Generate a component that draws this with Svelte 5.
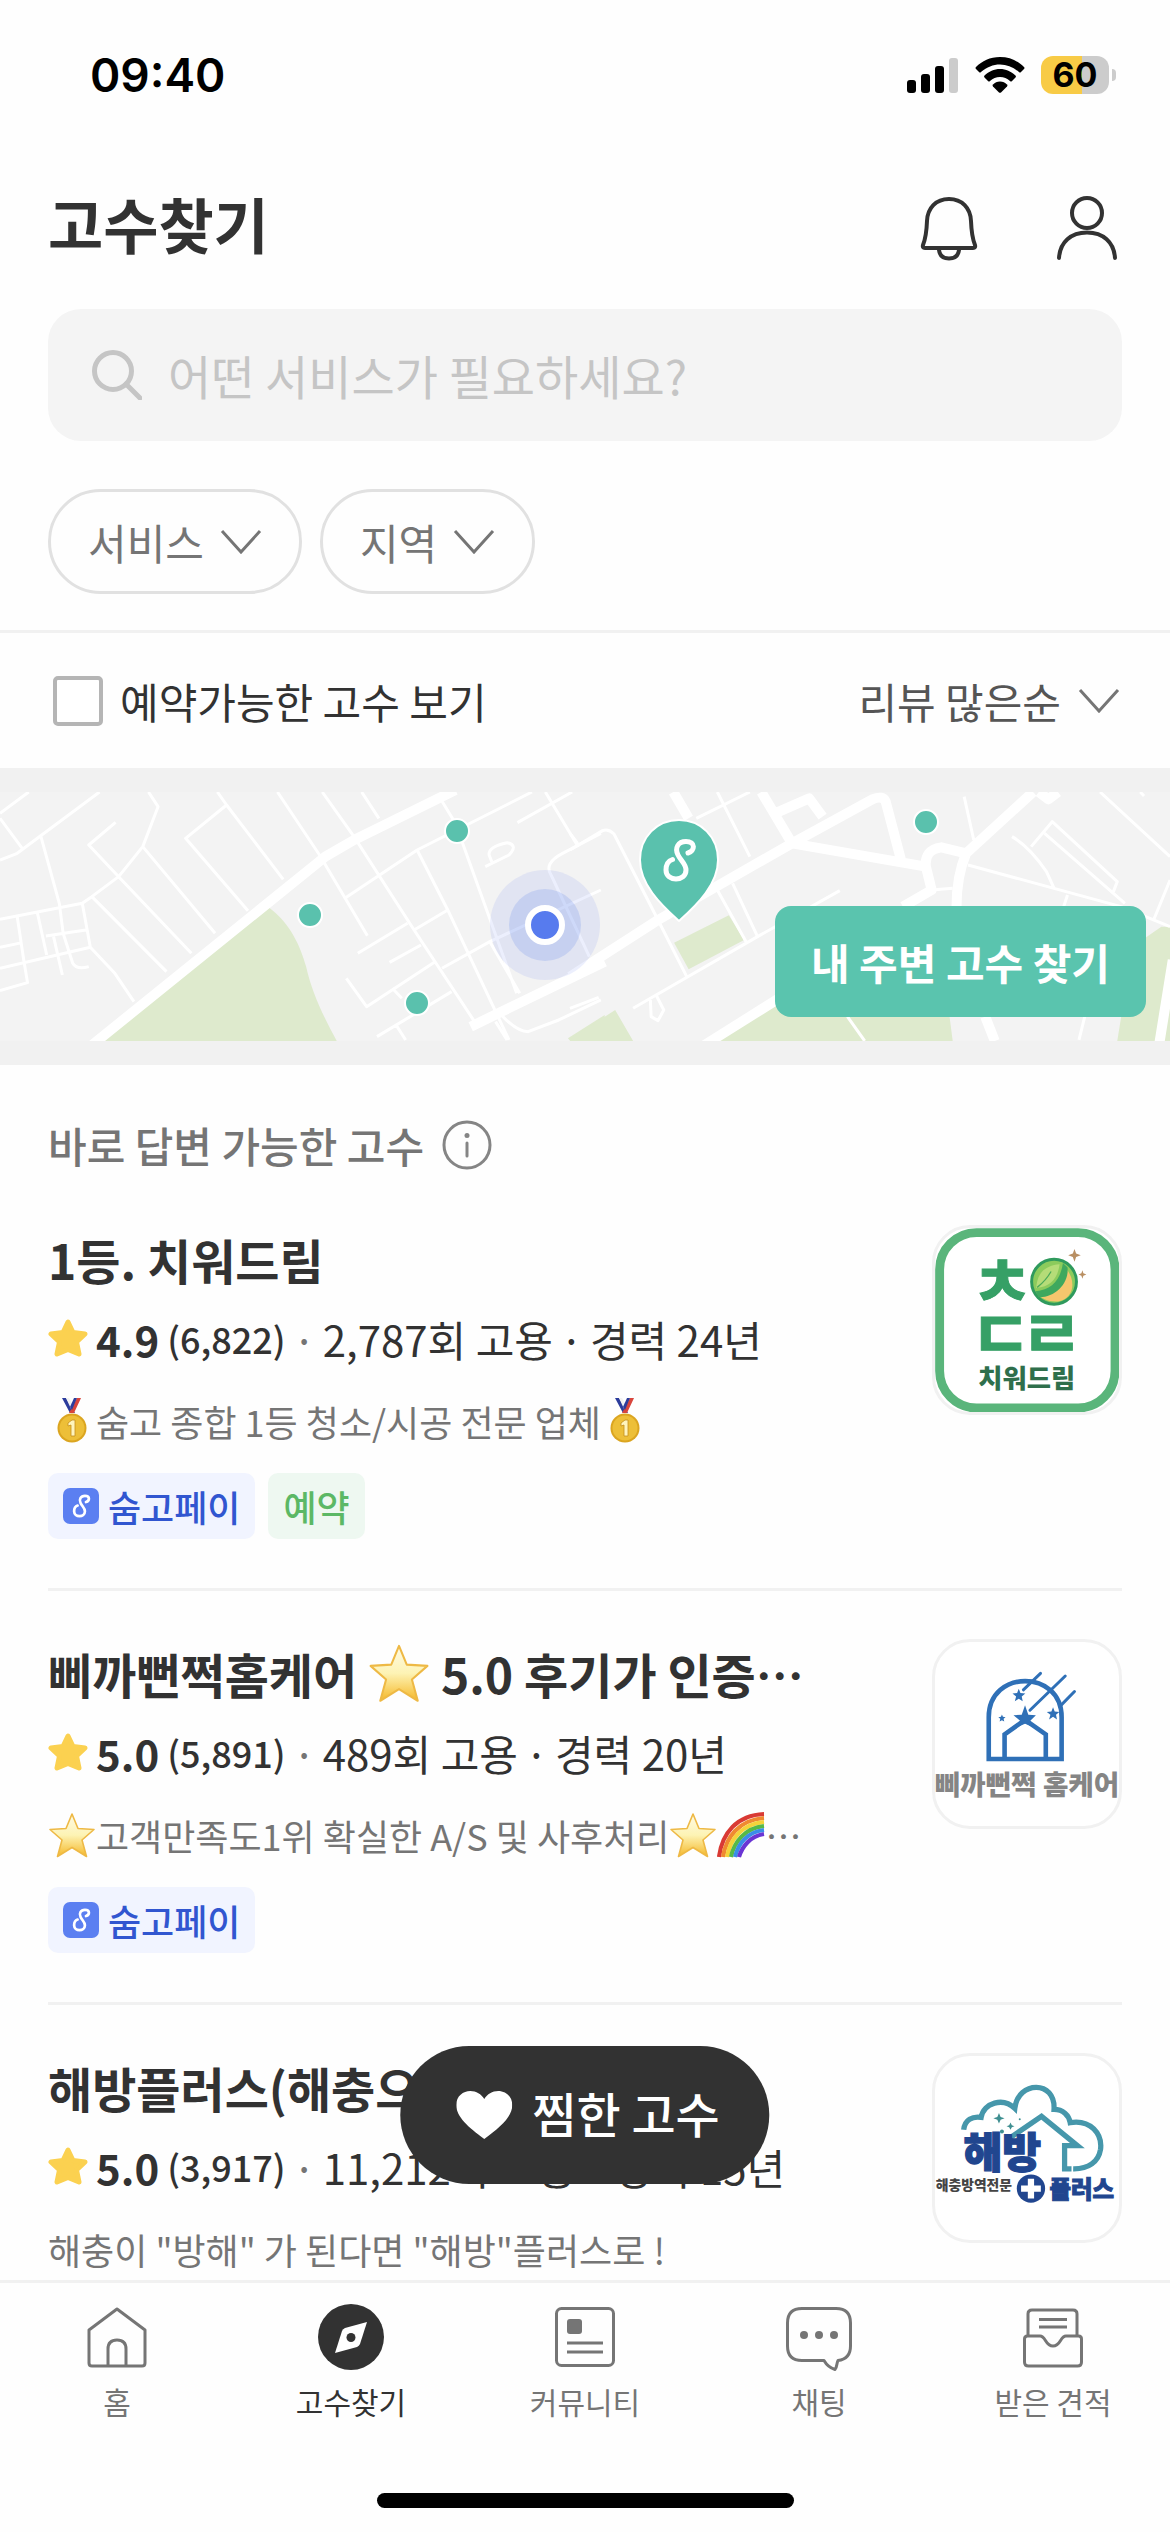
<script lang="ts">
  type Part = string | { emoji: 'medal' | 'star' | 'rainbow' };

  interface Pro {
    logo: 'dream' | 'homecare' | 'plus';
    name: Part[];
    score: string;
    reviews: string;
    hires: string;
    career: string;
    intro: Part[];
    pay: boolean;
    booking: boolean;
  }

  const pros: Pro[] = [
    {
      logo: 'dream',
      name: ['1등. 치워드림'],
      score: '4.9',
      reviews: '(6,822)',
      hires: '2,787회 고용',
      career: '경력 24년',
      intro: [{ emoji: 'medal' }, '숨고 종합 1등 청소/시공 전문 업체', { emoji: 'medal' }],
      pay: true,
      booking: true
    },
    {
      logo: 'homecare',
      name: ['삐까뻔쩍홈케어 ', { emoji: 'star' }, ' 5.0 후기가 인증⋯'],
      score: '5.0',
      reviews: '(5,891)',
      hires: '489회 고용',
      career: '경력 20년',
      intro: [{ emoji: 'star' }, '고객만족도1위 확실한 A/S 및 사후처리', { emoji: 'star' }, { emoji: 'rainbow' }, '⋯'],
      pay: true,
      booking: false
    },
    {
      logo: 'plus',
      name: ['해방플러스(해충으로부터 해방)'],
      score: '5.0',
      reviews: '(3,917)',
      hires: '11,212회 고용',
      career: '경력 15년',
      intro: ['해충이 "방해" 가 된다면 "해방"플러스로 !'],
      pay: false,
      booking: false
    }
  ];

  const tabs = [
    { id: 'home', label: '홈' },
    { id: 'find', label: '고수찾기' },
    { id: 'community', label: '커뮤니티' },
    { id: 'chat', label: '채팅' },
    { id: 'quotes', label: '받은 견적' }
  ];

  let active = $state('find');
  let query = $state('');
  let bookable = $state(false);
</script>

{#snippet chevron()}
  <svg class="chevron" viewBox="0 0 42 26" aria-hidden="true"><path d="M2 2 21 23 40 2" /></svg>
{/snippet}

{#snippet emoji(kind: string)}
  {#if kind === 'star'}
    <svg class="emoji" viewBox="0 0 48 48" role="img" aria-label="별">
      <defs>
        <linearGradient id="starFill" x1="0" y1="0" x2="0" y2="1">
          <stop offset="0" stop-color="#fffbe6" /><stop offset=".5" stop-color="#fdf3b4" /><stop offset="1" stop-color="#f5b829" />
        </linearGradient>
      </defs>
      <path d="M24 3 30 17.500 46 18.500 34 29 38.500 45.500 24 36.500 9.500 45.500 14 29 2 18.500 18 17.500Z" fill="url(#starFill)" stroke="#eeb945" stroke-width="1.600" stroke-linejoin="round" />
    </svg>
  {:else if kind === 'rainbow'}
    <svg class="emoji" viewBox="0 0 48 48" role="img" aria-label="무지개">
      <g fill="none" stroke-width="4.200">
        <path d="M2 46C5 22 20 4 47 3" stroke="#d93a34" />
        <path d="M6 46C9 26 22 9 47 7" stroke="#f08a30" />
        <path d="M10 46C13 28 25 13 47 11" stroke="#f5d33b" />
        <path d="M14 46C17 31 28 17 47 15" stroke="#57b947" />
        <path d="M18 46C21 33 30 21 47 19" stroke="#3a8de8" />
        <path d="M22 46C25 36 33 25 47 23" stroke="#6a35d4" />
      </g>
    </svg>
  {:else}
    <svg class="emoji" viewBox="0 0 48 48" role="img" aria-label="금메달">
      <path d="M14 1h4l9 15h-5z" fill="#2c3c9c" /><path d="M18 1h3l5 9-2 4z" fill="#f2f2f2" />
      <path d="M33 1h-4l-8 15h5z" fill="#d8453c" /><path d="M29 1h-3l-4 9 2 3z" fill="#2c3c9c" />
      <circle cx="24" cy="31" r="14.500" fill="#dba520" /><circle cx="24" cy="31" r="12.500" fill="#edbf38" />
      <path d="M20 26l4-3h3v16h-4V28l-3 1z" fill="#fff4bd" stroke="#c48f1c" stroke-width=".8" />
    </svg>
  {/if}
{/snippet}

{#snippet parts(list: Part[])}
  {#each list as part}{#if typeof part === 'string'}<span class="run">{part}</span>{:else}{@render emoji(part.emoji)}{/if}{/each}
{/snippet}

{#snippet logo(kind: string)}
  {#if kind === 'dream'}
    <svg class="logo" viewBox="98 80 558 558" role="img" aria-label="치워드림">
      <rect x="112" y="94" width="532" height="532" rx="112" fill="#fff" stroke="#5ab57b" stroke-width="27" />
      <g class="logo-jamo" fill="#36a066" stroke="#36a066" stroke-width="3">
        <text x="302" y="320" font-size="205" text-anchor="middle">ㅊ</text>
        <text x="298" y="478" font-size="205" text-anchor="middle">ㄷ</text>
        <text x="452" y="478" font-size="205" text-anchor="middle">ㄹ</text>
      </g>
      <circle cx="459" cy="243" r="68" fill="#8ccb5c" stroke="#2f9a5d" stroke-width="9" />
      <path d="M408 278C455 280 485 245 490 196 530 238 520 295 470 303 440 304 420 294 408 278Z" fill="#f5c66d" />
      <path d="M403 272C450 268 478 240 486 186L500 200C505 250 460 292 412 290Z" fill="#3fa85e" />
      <path d="M405 262C408 215 432 194 476 190 470 232 450 258 405 262Z" fill="#b5dc78" />
      <path d="M408 260Q434 240 450 212" fill="none" stroke="#4caa58" stroke-width="4" />
      <path d="M521 144l5 13 14 6-14 5-5 14-5-14-14-5 14-6zM545 208l3 9 9 4-9 4-3 9-3-9-9-4 9-4z" fill="#b98f62" />
      <text class="logo-text" x="376" y="564" font-size="80" text-anchor="middle" fill="#2f6f4c">치워드림</text>
    </svg>
  {:else if kind === 'homecare'}
    <svg class="logo" viewBox="98 92 558 558" role="img" aria-label="삐까뻔쩍 홈케어">
      <g fill="none" stroke="#2f70b7" stroke-width="14">
        <path d="M261 447V320C261 174 482 174 482 320V447Z" />
        <path d="M309 447V372L371 328 434 372V447" />
        <path d="M366 237 418 187M386 299 493 195M482 282 521 242" stroke-width="9" stroke-linecap="round" />
      </g>
      <g fill="#2f70b7">
        <path d="M371 284 381 313 404 314 387 331 393 349 371 340 349 349 356 331 336 314 361 313Z" />
        <path d="M352 234l5 13 15 1-11 9 3 15-12-8-12 8 4-15-11-9 14-1z" />
        <path d="M456 290l5 13 14 1-10 9 3 14-12-8-12 8 4-14-11-9 14-1z" />
        <path d="M301 312l3 7 8 1-6 5 2 8-7-4-7 4 2-8-6-5 8-1z" />
      </g>
      <text class="logo-text" x="377" y="556" font-size="84" text-anchor="middle" fill="#858585">삐까뻔쩍 홈케어</text>
    </svg>
  {:else}
    <svg class="logo" viewBox="98 104 558 558" role="img" aria-label="해충방역전문 해방플러스">
      <g fill="none" stroke="#4697ab" stroke-width="16">
        <path d="M185 328C188 296 212 286 238 290 246 246 304 228 340 263 350 178 464 176 459 266 486 266 504 283 508 306 570 296 606 340 600 387 594 425 563 447 517 446" />
        <path d="M324 353 421 287 530 376H491V446H512" />
      </g>
      <path d="M292 277l5 12 12 4-12 4-5 12-5-12-12-4 12-4zM327 306l4 8 8 3-8 3-4 8-4-8-8-3 8-3z" fill="#3f8f91" />
      <circle cx="301" cy="333" r="6" fill="#3f8f91" /><circle cx="355" cy="296" r="3" fill="#3f8f91" />
      <text class="logo-text" x="302" y="445" font-size="128" text-anchor="middle" fill="#21468f" stroke="#21468f" stroke-width="4">해방</text>
      <text class="logo-text" x="216" y="511" font-size="42" text-anchor="middle" fill="#444">해충방역전문</text>
      <circle cx="389" cy="506" r="43" fill="#21468f" />
      <path d="M389 476v60M359 506h60" stroke="#fff" stroke-width="19" />
      <text class="logo-text" x="543" y="534" font-size="71" text-anchor="middle" fill="#21468f" stroke="#21468f" stroke-width="3">플러스</text>
    </svg>
  {/if}
{/snippet}

{#snippet tabIcon(id: string)}
  <svg class="tab-icon" viewBox="0 0 68 68" aria-hidden="true">
    {#if id === 'home'}
      <path d="M6 27 34 6 62 27V60Q62 63 59 63H9Q6 63 6 60ZM25 63V46Q25 37 34 37T43 46V63" />
    {:else if id === 'find'}
      <circle cx="34" cy="34" r="33" fill="#323232" stroke="none" />
      <path d="M50 19 43 41Q42 43 40 44L18 50 25 28Q26 26 28 25Z" fill="#fff" stroke="none" />
      <circle cx="34" cy="34.500" r="4.500" fill="#323232" stroke="none" />
    {:else if id === 'community'}
      <rect x="5.500" y="5.500" width="57" height="57" rx="5" />
      <rect x="16" y="16" width="15" height="15" rx="3" fill="#757575" stroke="none" />
      <path d="M16 40H52M16 49H52" />
    {:else if id === 'chat'}
      <path d="M17 5.500H51Q65.500 5.500 65.500 20V43Q65.500 56 53 57.500C51.500 60 52.500 63 50 66.500 45 65 41 61 39 57.500H17Q2.500 57.500 2.500 43V20Q2.500 5.500 17 5.500Z" />
      <g fill="#757575" stroke="none"><circle cx="19" cy="32" r="4" /><circle cx="34" cy="32" r="4" /><circle cx="49" cy="32" r="4" /></g>
    {:else}
      <path d="M9 33V11Q9 7 13 7H54Q58 7 58 11V33M20 16.500H48M20 24H48" />
      <path d="M5.500 36Q5.500 33 8.500 33H21C27 33 26 43 34 43S41 33 47 33H59.500Q62.500 33 62.500 36V59Q62.500 63 58.500 63H9.500Q5.500 63 5.500 59Z" />
    {/if}
  </svg>
{/snippet}

<div class="app">
  <div class="status">
    <time>09:40</time>
    <div class="status-icons">
      <svg class="signal" viewBox="0 0 52 35" aria-hidden="true">
        <rect x="0" y="22" width="9" height="13" rx="3" /><rect x="14" y="16" width="9" height="19" rx="3" />
        <rect x="28" y="8" width="9" height="27" rx="3" /><rect x="42" y="0" width="9" height="35" rx="3" fill="#ccc" />
      </svg>
      <svg class="wifi" viewBox="0 0 50 36" aria-hidden="true">
        <path d="M25 0C35 0 43 4 49 10Q50 11 49 12L46 15Q45 16 44 15C38 10 32 7.500 25 7.500S12 10 6 15Q5 16 4 15L1 12Q0 11 1 10C7 4 15 0 25 0Z" />
        <path d="M25 12C31 12 36 14.500 40.500 18.500Q41.500 19.500 40.500 20.500L37 24Q36 25 35 24C32 21.500 29 20 25 20S18 21.500 15 24Q14 25 13 24L9.500 20.500Q8.500 19.500 9.500 18.500C14 14.500 19 12 25 12Z" />
        <path d="M25 24.500C28 24.500 30 25.500 32 27.500Q33 28.500 32 29.500L26 35.500Q25 36 24 35.500L18 29.500Q17 28.500 18 27.500C20 25.500 22 24.500 25 24.500Z" />
      </svg>
      <div class="battery"><span>60</span></div>
      <i class="battery-tip"></i>
    </div>
  </div>

  <header>
    <h1>고수찾기</h1>
    <div class="header-actions">
      <button aria-label="알림">
        <svg viewBox="0 0 66 66" aria-hidden="true">
          <path d="M33 4C20 4 11.500 13 11 26 10.500 40 9 45 7 50 6.500 52 7 53 9 53H57C59 53 59.500 52 59 50 57 45 55.500 40 55 26 54.500 13 46 4 33 4ZM23 53V55Q24 63.500 33 63.500T43 55V53" />
        </svg>
      </button>
      <button aria-label="내 정보">
        <svg viewBox="0 0 66 66" aria-hidden="true">
          <circle cx="33" cy="18" r="15" /><path d="M5 63C6 47 17 37.500 33 37.500S60 47 61 63" />
        </svg>
      </button>
    </div>
  </header>

  <main>
    <label class="search">
      <svg viewBox="0 0 50 50" aria-hidden="true"><circle cx="21" cy="21" r="18.500" /><path d="M34 34 48 48" /></svg>
      <input type="text" placeholder="어떤 서비스가 필요하세요?" aria-label="서비스 검색" bind:value={query} />
    </label>

    <div class="filters">
      <button>서비스 {@render chevron()}</button>
      <button>지역 {@render chevron()}</button>
    </div>

    <div class="sorting">
      <label><input type="checkbox" bind:checked={bookable} />예약가능한 고수 보기</label>
      <button>리뷰 많은순 {@render chevron()}</button>
    </div>

    <section class="nearby">
      <svg class="map" viewBox="0 0 1170 249" preserveAspectRatio="xMidYMid slice" aria-hidden="true">
        <rect width="1170" height="249" fill="#f3f3f3" />
        <g transform="translate(0 -32) scale(.3827 .3333)">
          <path d="M270 843 700 440C760 490 785 560 800 620 815 700 850 780 880 843ZM1484 835 1580 765V843H1490Z" fill="#deeacd" />
          <g class="roads">
            <path d="M0 160 75 96M0 175 58 265M0 300 45 280 260 96M107 230 155 430 165 520 190 610Q200 630 232 620M302 187 232 255 310 350 500 580M388 96 413 140 373 260 310 350 240 410 215 430 0 478M373 260 562 520M240 410 435 635M45 470 62 600 72 668 0 692M98 460 122 585M215 430 236 562M0 562 58 548M120 528 224 510M0 625 236 562 300 640 350 725M140 530 163 645M568 96 592 135 740 358M592 135 485 235 648 452M725 96 835 285 960 527M842 96 925 230 1082 510 1240 785M945 96 990 175M1145 105 1190 190 1350 700M905 412 1090 270 1390 96M1352 188 1495 96M1425 96 1508 255M1570 220 1470 280Q1420 310 1440 345L1540 590M1090 270 1170 450 1330 840M1082 510 1170 450M935 580 1065 490M1018 607 1100 555M905 655 958 740 1135 607M1155 625 1280 545 1570 390M1280 545 1358 700M985 830 1180 695M1035 795 1060 840M1025 685 1050 715M1310 765Q1350 815 1380 815L1460 780 1570 720M1295 785 1325 840M1268 320 1330 285Q1355 255 1325 248 1275 260 1278 285L1285 305" />
            <path d="M230 865 850 290 925 240 1190 90M1230 800 1580 605" class="main-road" />
          </g>
        </g>
        <g transform="translate(570 -32) scale(.3827 .3333)">
          <path d="M272 548 415 466 455 540 310 628ZM0 843V838L118 750 165 843ZM380 843 560 710H985L1000 843ZM1430 843 1470 560 1545 500H1570V843Z" fill="#deeacd" />
          <g class="roads">
            <path d="M0 270 85 212Q100 205 115 222L230 480 305 650M20 250 0 220M385 96 470 290M330 175 470 96M385 390 460 545M425 370 490 530M165 745 490 530 705 392M210 720 212 770 230 782 245 750 225 705M0 745 75 712M1030 110 1055 240M1155 230Q1200 260 1245 335L1265 385M1205 260 1260 185 1430 365 1420 395M1240 220 1450 430M1385 96 1568 290M1040 315 1440 440 1568 500M1568 360 1525 480M1300 405 1290 440M945 390 1000 385M1345 770 1330 840M725 770 770 843M1490 96 1500 108" />
            <path d="M0 650 230 480 580 250 790 118Q818 105 825 125L865 300M500 96 580 250 930 320M270 96 310 175M540 158 625 115 660 170M1210 96 1035 280Q1010 350 1010 440M930 320Q925 270 970 262L1035 280M930 320 945 390 870 440M345 860 560 705M1085 770 1110 843M1225 96 1250 118 1275 96M1540 850 1575 600" class="main-road" />
          </g>
        </g>
        <circle cx="545" cy="133" r="55" fill="#6a83ec" opacity=".13" />
        <circle cx="545" cy="133" r="36" fill="#5b80ea" opacity=".2" />
        <circle cx="545" cy="133" r="17" fill="#577bee" stroke="#fff" stroke-width="6" />
        <g fill="#5ac1ad" stroke="#fff" stroke-width="2">
          <circle cx="457" cy="39" r="12" /><circle cx="310" cy="123" r="12" /><circle cx="417" cy="211" r="12" /><circle cx="926" cy="30" r="12" />
          <path d="M679 129C660 112 640 92 640 68 640 45 657 28 679 28S718 45 718 68C718 92 698 112 679 129Z" />
        </g>
        <g transform="translate(663 47)"><path class="s-mark" d="M25 14C32 12 33 2.500 23 2.500 15 2.500 11.500 9 15 16 18 22 23 25 23 31 23 43 3 43 3 31 3 26 5 22 9.500 20.500" /></g>
      </svg>
      <button class="nearby-button">내 주변 고수 찾기</button>
    </section>

    <section class="list">
      <div class="list-title">
        <h2>바로 답변 가능한 고수</h2>
        <button aria-label="안내">
          <svg viewBox="0 0 50 50" aria-hidden="true"><circle cx="25" cy="25" r="23" /><path d="M25 23V36" /><circle class="dot" cx="25" cy="15.500" r="2.500" /></svg>
        </button>
      </div>

      {#each pros as pro}
        <article>
          <div class="info">
            <h3>{@render parts(pro.name)}</h3>
            <p class="stats">
              <svg class="rating-star" viewBox="0 0 40 38" aria-hidden="true">
                <path d="M20 3 25 13.500 37 15 28.500 23 31 35 20 30.500 9 35 11.500 23 3 15 15 13.500Z" />
              </svg>
              <b>{pro.score}</b><span class="reviews">{pro.reviews}</span><span class="sep">·</span><span>{pro.hires}</span><span class="sep dark">·</span><span>{pro.career}</span>
            </p>
            <p class="intro">{@render parts(pro.intro)}</p>
            <div class="chips">
              {#if pro.pay}
                <span class="chip pay">
                  <svg viewBox="0 0 36 36" aria-hidden="true">
                    <rect width="36" height="36" rx="7" fill="#5b7ff1" />
                    <g transform="translate(9.500 6.500) scale(.54)"><path class="s-mark" d="M25 14C32 12 33 2.500 23 2.500 15 2.500 11.500 9 15 16 18 22 23 25 23 31 23 43 3 43 3 31 3 26 5 22 9.500 20.500" /></g>
                  </svg>숨고페이
                </span>
              {/if}
              {#if pro.booking}<span class="chip booking">예약</span>{/if}
            </div>
          </div>
          <div class="avatar">{@render logo(pro.logo)}</div>
        </article>
      {/each}
    </section>

    <button class="saved">
      <svg viewBox="0 0 56 48" aria-hidden="true"><path d="M28 48C12 36 0 26 0 14 0 5 7 0 14 0 20 0 25 3 28 8 31 3 36 0 42 0 49 0 56 5 56 14 56 26 44 36 28 48Z" /></svg>
      <span>찜한 고수</span>
    </button>
  </main>

  <nav>
    {#each tabs as tab}
      <button class:active={active === tab.id} onclick={() => (active = tab.id)}>
        {@render tabIcon(tab.id)}
        {tab.label}
      </button>
    {/each}
  </nav>
  <div class="home-indicator"></div>
</div>

<style>
  :global(body) { margin: 0; background: #fefefe; }
  .app { height: 100vh; display: flex; flex-direction: column; overflow: hidden; background: #fefefe; color: #323232; font-family: "Noto Sans CJK KR", sans-serif; font-size: 42px; }
  button { border: 0; padding: 0; margin: 0; background: none; font: inherit; color: inherit; display: flex; align-items: center; }
  h1, h2, h3, p { margin: 0; }
  svg { display: block; flex: none; }

  .status { flex: none; height: 150px; padding: 0 54px 0 90px; display: flex; align-items: center; justify-content: space-between; font-family: Inter, sans-serif; color: #000; }
  time { font-size: 46px; font-weight: 600; }
  .status-icons { display: flex; align-items: center; }
  .signal { width: 52px; height: 35px; margin-right: 16px; }
  .wifi { width: 50px; height: 36px; margin-right: 16px; }
  .battery { width: 68px; height: 38px; border-radius: 12px; background: linear-gradient(90deg, #f8cb46 60%, #ccc 60%); display: flex; align-items: center; justify-content: center; font-size: 34px; line-height: 38px; font-weight: 700; }
  .battery-tip { width: 4px; height: 12px; margin-left: 3px; border-radius: 0 4px 4px 0; background: #ccc; }

  header { flex: none; height: 146px; padding: 0 50px 4px 48px; display: flex; align-items: center; justify-content: space-between; }
  h1 { font-size: 60px; line-height: 84px; font-weight: 700; }
  .header-actions { display: flex; gap: 72px; padding-top: 10px; }
  .header-actions svg { width: 66px; height: 66px; fill: none; stroke: #323232; stroke-width: 4; stroke-linejoin: round; stroke-linecap: round; }

  main { flex: 1; min-height: 0; overflow: hidden; position: relative; }
  .search { margin: 9px 48px 48px; height: 132px; padding: 0 44px; border-radius: 33px; background: #f4f4f4; display: flex; align-items: center; gap: 26px; }
  .search svg { width: 50px; height: 50px; fill: none; stroke: #c5c5c5; stroke-width: 5; stroke-linecap: round; }
  .search input { flex: 1; min-width: 0; border: 0; outline: 0; padding: 0; background: none; font: inherit; font-size: 47px; line-height: 72px; color: #323232; }
  .search input::placeholder { color: #c5c5c5; opacity: 1; }

  .chevron { width: 42px; height: 26px; fill: none; stroke: #757575; stroke-width: 3; }
  .filters { padding: 0 48px 36px; display: flex; gap: 18px; border-bottom: 3px solid #f1f1f1; }
  .filters button { height: 105px; padding: 0 37px; gap: 16px; border: 3px solid #e1e1e1; border-radius: 53px; color: #757575; }
  .sorting { height: 135px; padding: 0 50px 0 53px; display: flex; align-items: center; justify-content: space-between; }
  .sorting label { display: flex; align-items: center; gap: 17px; }
  .sorting input { appearance: none; box-sizing: border-box; width: 50px; height: 50px; margin: 0; border: 4px solid #b5b5b5; border-radius: 5px; background: #fff; }
  .sorting input:checked { background: #5ac1ad; }
  .sorting button { gap: 17px; color: #555; }

  .nearby { position: relative; padding: 24px 0; background: #f1f1f1; }
  .map { width: 100%; height: 249px; }
  .roads { fill: none; stroke: #fff; stroke-width: 3px; stroke-linejoin: round; }
  .roads path { vector-effect: non-scaling-stroke; }
  .main-road { stroke-width: 10px; }
  .s-mark { fill: none; stroke: #fff; stroke-width: 5; stroke-linecap: round; }
  .nearby-button { position: absolute; right: 24px; bottom: 48px; height: 111px; padding: 0 36px; border-radius: 16px; background: #5ac4ae; color: #fff; font-weight: 700; }

  .list { padding: 48px 48px 0; }
  .list-title { height: 64px; display: flex; align-items: center; gap: 18px; color: #757575; }
  h2 { font-size: 42px; line-height: 64px; font-weight: 500; }
  .list-title svg { width: 50px; height: 50px; fill: none; stroke: #858585; stroke-width: 3; stroke-linecap: round; }
  .list-title .dot { fill: #858585; stroke: none; }

  article { padding: 48px 0; display: flex; justify-content: space-between; border-bottom: 3px solid #f1f1f1; }
  .info { min-width: 0; white-space: nowrap; }
  .run { white-space: pre; }
  h3 { display: flex; align-items: center; height: 68px; font-size: 48px; font-weight: 700; }
  h3 .emoji { width: 62px; height: 62px; }
  .stats { display: flex; align-items: center; height: 90px; }
  .rating-star { width: 40px; height: 38px; fill: #fbd150; stroke: #fbd150; stroke-width: 5; stroke-linejoin: round; }
  .stats b { margin: 0 8px; font-weight: 700; }
  .reviews { font-size: 36px; font-weight: 500; }
  .sep { width: 37px; text-align: center; color: #757575; }
  .dark { color: #323232; }
  .intro { display: flex; align-items: center; height: 76px; font-size: 36px; color: #757575; }
  .intro .emoji { width: 48px; height: 48px; }
  .chips { margin: 14px 0 1px; display: flex; gap: 13px; }
  .chip { height: 66px; padding: 0 15px; border-radius: 10px; display: flex; align-items: center; gap: 9px; font-size: 36px; font-weight: 500; }
  .chip svg { width: 36px; height: 36px; }
  .pay { background: #f1f4ff; color: #3156d0; }
  .booking { background: #eef8f1; color: #5cb865; }
  .avatar { flex: none; box-sizing: border-box; width: 190px; height: 190px; border: 3px solid #f1f1f1; border-radius: 38px; overflow: hidden; background: #fff; }
  .logo { width: 100%; height: 100%; }
  .logo-text, .logo-jamo { font-family: "Noto Sans CJK KR", sans-serif; font-weight: 900; }
  .logo-jamo { font-weight: 700; }

  .saved { position: absolute; left: 50%; bottom: 96px; transform: translateX(-50%); height: 138px; padding: 0 50px 0 56px; gap: 20px; border-radius: 69px; background: #323232; color: #fff; font-size: 48px; font-weight: 500; white-space: nowrap; }
  .saved svg { width: 56px; height: 48px; fill: #fff; }
  .saved span { padding-bottom: 6px; }

  nav { flex: none; border-top: 3px solid #f1f1f1; padding-top: 20px; display: grid; grid-template-columns: repeat(5, 1fr); }
  nav button { flex-direction: column; gap: 8px; font-size: 30px; line-height: 44px; color: #757575; }
  nav .active { color: #323232; }
  .tab-icon { width: 68px; height: 68px; fill: none; stroke: #757575; stroke-width: 3; stroke-linejoin: round; }
  .home-indicator { flex: none; width: 417px; max-width: 60%; height: 15px; margin: 70px auto 24px; border-radius: 8px; background: #000; }
</style>
